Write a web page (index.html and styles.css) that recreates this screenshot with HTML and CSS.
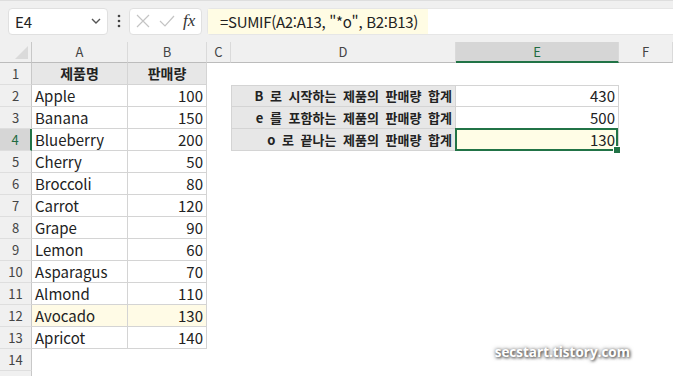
FILE: index.html
```html
<!DOCTYPE html>
<html lang="ko">
<head>
  <meta charset="UTF-8" />
  <meta name="viewport" content="width=device-width, initial-scale=1.0"/>
  <title>SUMIF</title>
  <link rel="stylesheet" href="styles.css">
</head>
<body>

  <!-- Formula bar -->
  <div class="toolbar">
    <div class="namebox">
      <span>E4</span>
      <svg width="12" height="8" viewBox="0 0 12 8"><path d="M2 2 L6 6 L10 2" fill="none" stroke="#555" stroke-width="1.4"/></svg>
    </div>
    <div class="kebab">
      <svg width="4" height="14" viewBox="0 0 4 14"><circle cx="2" cy="2" r="1.3" fill="#444"/><circle cx="2" cy="7" r="1.3" fill="#444"/><circle cx="2" cy="12" r="1.3" fill="#444"/></svg>
    </div>
    <div class="fxbox">
      <svg width="14" height="14" viewBox="0 0 14 14"><path d="M1 1 L13 13 M13 1 L1 13" stroke="#c4c4c4" stroke-width="1.2"/></svg>
      <svg width="16" height="12" viewBox="0 0 16 12"><path d="M1 6 L6 11 L15 1" fill="none" stroke="#c4c4c4" stroke-width="1.2"/></svg>
      <span class="fx">fx</span>
    </div>
    <div class="formula">
      <span class="formula-text">=SUMIF(A2:A13, "*o", B2:B13)</span>
    </div>
  </div>

  <!-- Sheet -->
  <div class="sheet">
    <div class="corner"><span class="tri"></span></div>
    <div class="colhead">A</div>
    <div class="colhead">B</div>
    <div class="colhead">C</div>
    <div class="colhead">D</div>
    <div class="colhead active">E</div>
    <div class="colhead">F</div>

    <div class="rh">1</div>
    <div class="cell bd hd">제품명</div><div class="cell bd hd">판매량</div>
    <div class="cell"></div><div class="cell"></div><div class="cell"></div><div class="cell"></div>

    <div class="rh">2</div>
    <div class="cell bd">Apple</div><div class="cell bd num">100</div>
    <div class="cell"></div><div class="cell bd lbl top">B 로 시작하는 제품의 판매량 합계</div><div class="cell bd num top">430</div><div class="cell"></div>

    <div class="rh">3</div>
    <div class="cell bd">Banana</div><div class="cell bd num">150</div>
    <div class="cell"></div><div class="cell bd lbl">e 를 포함하는 제품의 판매량 합계</div><div class="cell bd num">500</div><div class="cell"></div>

    <div class="rh active">4</div>
    <div class="cell bd">Blueberry</div><div class="cell bd num">200</div>
    <div class="cell"></div><div class="cell bd lbl">o 로 끝나는 제품의 판매량 합계</div><div class="cell bd num sel">130</div><div class="cell"></div>

    <div class="rh">5</div>
    <div class="cell bd">Cherry</div><div class="cell bd num">50</div>
    <div class="cell"></div><div class="cell"></div><div class="cell"></div><div class="cell"></div>

    <div class="rh">6</div>
    <div class="cell bd">Broccoli</div><div class="cell bd num">80</div>
    <div class="cell"></div><div class="cell"></div><div class="cell"></div><div class="cell"></div>

    <div class="rh">7</div>
    <div class="cell bd">Carrot</div><div class="cell bd num">120</div>
    <div class="cell"></div><div class="cell"></div><div class="cell"></div><div class="cell"></div>

    <div class="rh">8</div>
    <div class="cell bd">Grape</div><div class="cell bd num">90</div>
    <div class="cell"></div><div class="cell"></div><div class="cell"></div><div class="cell"></div>

    <div class="rh">9</div>
    <div class="cell bd">Lemon</div><div class="cell bd num">60</div>
    <div class="cell"></div><div class="cell"></div><div class="cell"></div><div class="cell"></div>

    <div class="rh">10</div>
    <div class="cell bd">Asparagus</div><div class="cell bd num">70</div>
    <div class="cell"></div><div class="cell"></div><div class="cell"></div><div class="cell"></div>

    <div class="rh">11</div>
    <div class="cell bd">Almond</div><div class="cell bd num">110</div>
    <div class="cell"></div><div class="cell"></div><div class="cell"></div><div class="cell"></div>

    <div class="rh">12</div>
    <div class="cell bd hl">Avocado</div><div class="cell bd num hl">130</div>
    <div class="cell"></div><div class="cell"></div><div class="cell"></div><div class="cell"></div>

    <div class="rh">13</div>
    <div class="cell bd">Apricot</div><div class="cell bd num">140</div>
    <div class="cell"></div><div class="cell"></div><div class="cell"></div><div class="cell"></div>

    <div class="rh">14</div>
    <div class="cell"></div><div class="cell"></div>
    <div class="cell"></div><div class="cell"></div><div class="cell"></div><div class="cell"></div>

    <div class="rh"></div>
    <div class="cell"></div><div class="cell"></div>
    <div class="cell"></div><div class="cell"></div><div class="cell"></div><div class="cell"></div>
  </div>

  <div class="watermark">secstart.tistory.com</div>

</body>
</html>
```

FILE: styles.css
```css
* {
  box-sizing: border-box;
}

body {
  margin: 0;
  height: 376px;
  overflow: hidden;
  background: #fff;
  font-family: "Noto Sans CJK KR", "Noto Sans", sans-serif;
  color: #222;
  position: relative;
}

/* Formula bar */
.toolbar {
  display: flex;
  align-items: center;
  height: 42px;
  padding: 7px 0 8px 8px;
  background: #f0f0f0;
  border-top: 1px solid #dedede;
}

.namebox {
  width: 100px;
  height: 27px;
  background: #fff;
  border: 1px solid #e0e0e0;
  border-radius: 4px;
  display: flex;
  align-items: center;
  justify-content: space-between;
  padding: 0 5px 0 6px;
  font-size: 15px;
}

.kebab {
  width: 21px;
  display: flex;
  justify-content: center;
}

.fxbox {
  width: 73px;
  height: 27px;
  background: #fff;
  border: 1px solid #e0e0e0;
  border-radius: 4px;
  display: flex;
  align-items: center;
  gap: 9px;
  padding-left: 6px;
}

.fx {
  font-family: "Liberation Serif", serif;
  font-style: italic;
  font-size: 17px;
  color: #333;
  margin-left: -1px;
}

.formula {
  flex: 1;
  height: 27px;
  margin-left: 5px;
  background: #fff;
  border: 1px solid #e6e6e6;
  border-right: none;
  border-radius: 4px 0 0 4px;
  display: flex;
}

.formula-text {
  background: #fffce4;
  padding: 0 10px 0 12px;
  font-size: 15px;
  line-height: 25px;
  letter-spacing: -0.3px;
  color: #222;
}

/* Sheet grid */
.sheet {
  display: grid;
  grid-template-columns: 32px 96px 79px 24px 225px 163px 54px;
  grid-template-rows: 21px repeat(15, 22px);
}

.corner {
  background: #f0f0f0;
  border-right: 1px solid #c8c8c8;
  border-bottom: 1px solid #bcbcbc;
  position: relative;
}

.corner .tri {
  position: absolute;
  right: 3px;
  bottom: 3px;
  width: 0;
  height: 0;
  border-left: 13px solid transparent;
  border-bottom: 13px solid #dadada;
}

.colhead {
  background: #f0f0f0;
  border-right: 1px solid #dadada;
  border-bottom: 1px solid #bcbcbc;
  text-align: center;
  font-size: 13px;
  line-height: 20px;
  color: #444;
}

.colhead.active {
  background: #d6d6d6;
  border-bottom: 2px solid #217346;
  color: #1f6b41;
}

.rh {
  background: #f0f0f0;
  border-right: 1px solid #c8c8c8;
  border-bottom: 1px solid #dedede;
  text-align: center;
  font-size: 13px;
  line-height: 22px;
  color: #444;
}

.rh.active {
  background: #d6d6d6;
  border-right: 2px solid #217346;
  color: #1f6b41;
}

.cell {
  font-size: 15px;
  line-height: 21px;
  padding: 0 3px;
  white-space: nowrap;
  position: relative;
}

.bd {
  border-right: 1px solid #d4d4d4;
  border-bottom: 1px solid #d4d4d4;
}

.top {
  border-top: 1px solid #d4d4d4;
  line-height: 20px;
}

.num {
  text-align: right;
}

.hd {
  background: #e7e7e7;
  font-weight: bold;
  font-size: 14px;
  text-align: center;
}

.lbl {
  background: #e7e7e7;
  border-left: 1px solid #d4d4d4;
  font-weight: bold;
  font-size: 13px;
  word-spacing: 3px;
  text-align: right;
}

.hl {
  background: #fffbe6;
}

.sel {
  background: #fffde6;
}

.sel::after {
  content: "";
  position: absolute;
  top: -1px;
  left: -1px;
  right: 0;
  bottom: -1px;
  border: 2px solid #217346;
}

.sel::before {
  content: "";
  position: absolute;
  right: -3px;
  bottom: -4px;
  width: 6px;
  height: 6px;
  background: #217346;
  border: 1px solid #fff;
  z-index: 1;
}

/* Watermark */
.watermark {
  position: absolute;
  right: 43px;
  bottom: 15px;
  font-family: "Open Sans", sans-serif;
  font-weight: bold;
  font-size: 13.5px;
  color: #fff;
  text-shadow: 1px 1px 3px #444, 0 0 4px #777;
}
```
